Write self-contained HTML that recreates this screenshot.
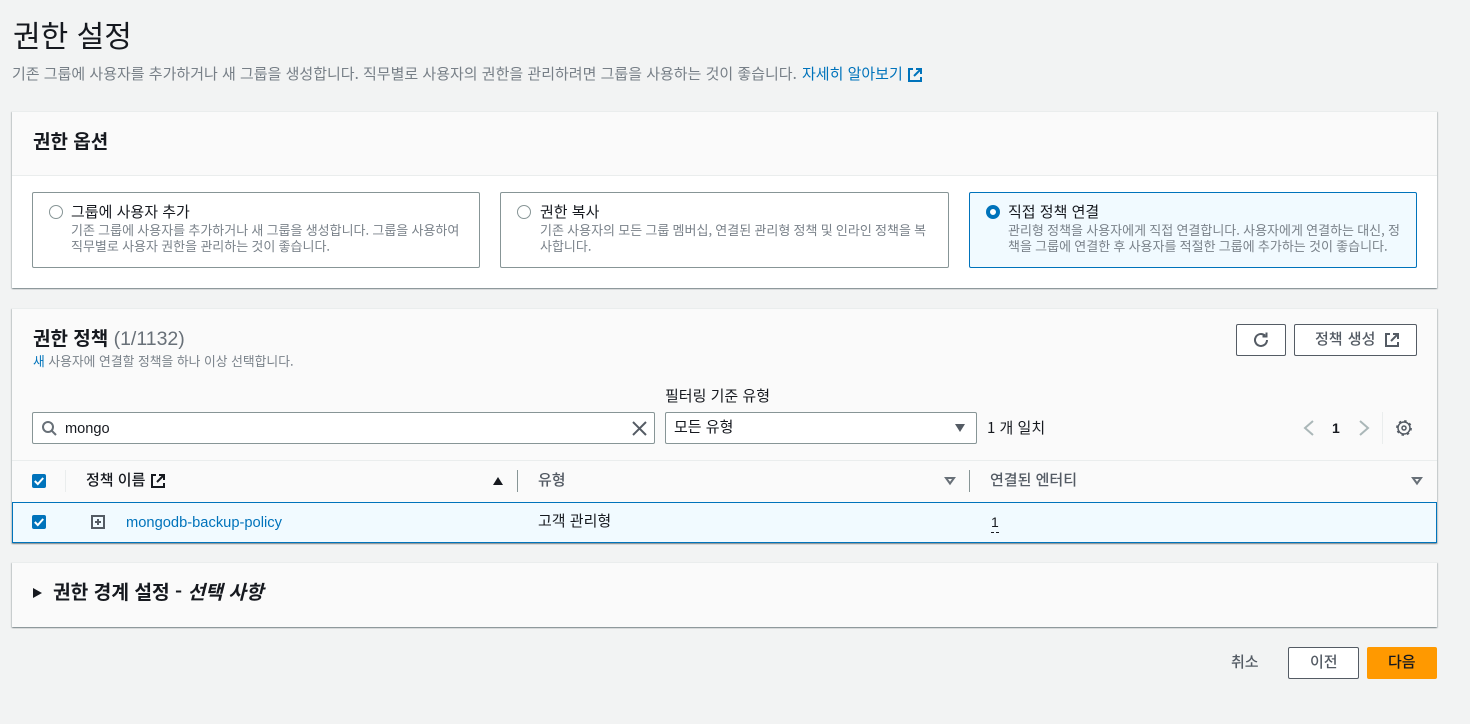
<!DOCTYPE html>
<html lang="ko"><head><meta charset="utf-8"><title>권한 설정</title>
<style>
*{box-sizing:border-box}
html,body{margin:0;padding:0}
body{width:1470px;height:724px;background:#f2f3f3;position:relative;overflow:hidden;font-family:"Liberation Sans","Noto Sans CJK KR",sans-serif;color:#16191f;font-size:14px}
.t{position:absolute;white-space:nowrap;line-height:20px}
.k{font-family:"Noto Sans CJK KR",sans-serif}
.card{position:absolute;left:12px;width:1425px;background:#fafafa;box-shadow:0 1px 1px 0 rgba(0,28,36,.3),1px 1px 1px 0 rgba(0,28,36,.15),-1px 1px 1px 0 rgba(0,28,36,.15);border-top:1px solid #eaeded}
.tile{position:absolute;top:192px;height:76px;border:1px solid #879596;border-radius:2px;background:#fff}
.tile.on{border-color:#0073bb;background:#f1faff}
.radio{position:absolute;top:205px;width:14px;height:14px;border-radius:50%;border:1.5px solid #879596;background:#fff}
.radio.on{border:4px solid #0073bb}
.d{font-size:13px;line-height:16px;color:#7a828a;word-spacing:-.4px}
.h{font-size:15px;font-weight:400}
.btn{position:absolute;border:1px solid #545b64;border-radius:2px;background:#fff}
.cb{position:absolute;left:32px;width:14px;height:14px;background:#0073bb;border-radius:2px}
.sep{position:absolute;width:1px;background:#879596}
svg{position:absolute;overflow:visible}
</style></head><body>

<div class="t k" style="left:13px;top:14px;font-size:30px;line-height:40px;color:#16191f">권한 설정</div>
<div class="t k" style="left:12px;top:64px;font-size:15px;color:#777f87">기존 그룹에 사용자를 추가하거나 새 그룹을 생성합니다. 직무별로 사용자의 권한을 관리하려면 그룹을 사용하는 것이 좋습니다. <span style="color:#0073bb;margin-left:1px">자세히 알아보기</span></div>
<svg style="left:908px;top:68px" width="14" height="14" viewBox="0 0 14 14" fill="none" stroke="#0073bb" stroke-width="2"><path d="M5 1H1v12h12V9M8 1h5v5M13 1L6 8"/></svg>

<!-- Card 1 -->
<div class="card" style="top:111px;height:177px;background:#fff">
  <div style="height:64px;background:#fafafa;border-bottom:1px solid #eaeded"></div>
</div>
<div class="t k" style="left:33px;top:130px;font-size:19px;font-weight:700;line-height:22px">권한 옵션</div>

<div class="tile" style="left:32px;width:448px"></div>
<div class="radio" style="left:49px"></div>
<div class="t k h" style="left:71px;top:202px">그룹에 사용자 추가</div>
<div class="t k d" style="left:71px;top:222px">기존 그룹에 사용자를 추가하거나 새 그룹을 생성합니다. 그룹을 사용하여<br>직무별로 사용자 권한을 관리하는 것이 좋습니다.</div>

<div class="tile" style="left:500px;width:449px"></div>
<div class="radio" style="left:517px"></div>
<div class="t k h" style="left:540px;top:202px">권한 복사</div>
<div class="t k d" style="left:540px;top:222px">기존 사용자의 모든 그룹 멤버십, 연결된 관리형 정책 및 인라인 정책을 복<br>사합니다.</div>

<div class="tile on" style="left:969px;width:448px"></div>
<div class="radio on" style="left:986px"></div>
<div class="t k h" style="left:1008px;top:202px">직접 정책 연결</div>
<div class="t k d" style="left:1008px;top:222px">관리형 정책을 사용자에게 직접 연결합니다. 사용자에게 연결하는 대신, 정<br>책을 그룹에 연결한 후 사용자를 적절한 그룹에 추가하는 것이 좋습니다.</div>

<!-- Card 2 -->
<div class="card" style="top:308px;height:235px"></div>
<div class="t k" style="left:33px;top:327px;font-size:19px;line-height:22px"><b>권한 정책</b> <span style="color:#687078;font-family:'Liberation Sans';font-size:19.500px">(1/1132)</span></div>
<div class="t k" style="left:33px;top:352px;font-size:12.800px;line-height:18px;color:#7a828a"><span style="color:#0073bb">새</span> 사용자에 연결할 정책을 하나 이상 선택합니다.</div>

<div class="btn" style="left:1236px;top:324px;width:50px;height:32px"></div>
<svg style="left:1253px;top:332px" width="16" height="16" viewBox="0 0 16 16" fill="none" stroke="#545b64" stroke-width="2"><path d="M14 8a6 6 0 1 1-2-4.500"/><path d="M13.500 .5V4.500H9.500"/></svg>
<div class="btn" style="left:1294px;top:324px;width:123px;height:32px"></div>
<div class="t k" style="left:1315px;top:329px;font-size:15px;word-spacing:1px;color:#545b64;font-weight:500">정책 생성</div>
<svg style="left:1385px;top:333px" width="14" height="14" viewBox="0 0 14 14" fill="none" stroke="#545b64" stroke-width="2"><path d="M5 1H1v12h12V9M8 1h5v5M13 1L6 8"/></svg>

<div class="t k h" style="left:665px;top:386px">필터링 기준 유형</div>

<div style="position:absolute;left:32px;top:412px;width:623px;height:32px;background:#fff;border:1px solid #879596;border-radius:2px"></div>
<svg style="left:41px;top:420px" width="16" height="16" viewBox="0 0 16 16" fill="none" stroke="#687078" stroke-width="2"><circle cx="7" cy="7" r="5"/><path d="M10.500 10.500L15 15"/></svg>
<div class="t" style="left:65px;top:419px;font-size:14.600px">mongo</div>
<svg style="left:632px;top:421px" width="14" height="14" viewBox="0 0 14 14" fill="none" stroke="#545b64" stroke-width="2"><path d="M1 1l13 13M14 1L1 14"/></svg>

<div style="position:absolute;left:665px;top:412px;width:312px;height:32px;background:#fff;border:1px solid #879596;border-radius:2px"></div>
<div class="t k h" style="left:674px;top:417px">모든 유형</div>
<svg style="left:955px;top:424px" width="10" height="8" viewBox="0 0 10 8"><path d="M0 0h10L5 8z" fill="#545b64"/></svg>

<div class="t k h" style="left:987px;top:418px">1 개 일치</div>

<svg style="left:1303px;top:420px" width="12" height="16" viewBox="0 0 12 16" fill="none" stroke="#aab7b8" stroke-width="2"><path d="M10 1L2 8l8 7"/></svg>
<div class="t" style="left:1332px;top:418px;font-size:14px;font-weight:700">1</div>
<svg style="left:1358px;top:420px" width="12" height="16" viewBox="0 0 12 16" fill="none" stroke="#aab7b8" stroke-width="2"><path d="M2 1l8 7-8 7"/></svg>
<div style="position:absolute;left:1382px;top:412px;width:1px;height:32px;background:#eaeded"></div>
<svg style="left:1396px;top:420px" width="16" height="16" viewBox="0 0 16 16" fill="none" stroke="#545b64"><circle cx="8" cy="8" r="6" stroke-width="1.500"/><circle cx="8" cy="8" r="7.200" stroke-width="1.400" stroke-dasharray="2.500 3.150"/><circle cx="8" cy="8" r="2" stroke-width="1.500"/></svg>

<div style="position:absolute;left:12px;top:460px;width:1425px;height:1px;background:#eaeded"></div>
<div class="cb" style="top:474px"></div>
<svg style="left:34px;top:477px" width="10" height="8" viewBox="0 0 10 8" fill="none" stroke="#fff" stroke-width="2"><path d="M.8 4l3 3L9.200 1"/></svg>
<div style="position:absolute;left:65px;top:470px;width:1px;height:22px;background:#eaeded"></div>
<div class="t k" style="left:86px;top:470px;font-size:15px;font-weight:500">정책 이름</div>
<svg style="left:151px;top:474px" width="14" height="14" viewBox="0 0 14 14" fill="none" stroke="#16191f" stroke-width="2"><path d="M5 1H1v12h12V9M8 1h5v5M13 1L6 8"/></svg>
<svg style="left:493px;top:477px" width="10" height="8" viewBox="0 0 10 8"><path d="M5 0l5 8H0z" fill="#16191f"/></svg>
<div class="sep" style="left:517px;top:470px;height:22px"></div>
<div class="t k" style="left:538px;top:470px;font-size:15px;color:#545b64;font-weight:500">유형</div>
<svg style="left:945px;top:477px" width="10" height="8" viewBox="0 0 10 8" fill="none" stroke="#687078" stroke-width="2"><path d="M1 1h8L5 6.500z"/></svg>
<div class="sep" style="left:969px;top:470px;height:22px"></div>
<div class="t k" style="left:990px;top:470px;font-size:15px;color:#545b64;font-weight:500">연결된 엔터티</div>
<svg style="left:1412px;top:477px" width="10" height="8" viewBox="0 0 10 8" fill="none" stroke="#687078" stroke-width="2"><path d="M1 1h8L5 6.500z"/></svg>

<div style="position:absolute;left:12px;top:502px;width:1425px;height:41px;background:#f1faff;border:1px solid #0073bb"></div>
<div class="cb" style="top:515px"></div>
<svg style="left:34px;top:518px" width="10" height="8" viewBox="0 0 10 8" fill="none" stroke="#fff" stroke-width="2"><path d="M.8 4l3 3L9.200 1"/></svg>
<svg style="left:91px;top:515px" width="14" height="14" viewBox="0 0 14 14" fill="none" stroke="#545b64" stroke-width="2"><rect x="1" y="1" width="12" height="12"/><path d="M7 4v6M4 7h6"/></svg>
<div class="t" style="left:126px;top:513px;font-size:14.700px;color:#0073bb">mongodb-backup-policy</div>
<div class="t k h" style="left:538px;top:511px">고객 관리형</div>
<div class="t" style="left:991px;top:513px;font-size:14px;border-bottom:1px dashed #16191f;line-height:19px">1</div>

<!-- Card 3 -->
<div class="card" style="top:562px;height:65px"></div>
<svg style="left:33px;top:588px" width="9" height="10" viewBox="0 0 9 10"><path d="M0 0l9 5-9 5z" fill="#16191f"/></svg>
<div class="t k" style="left:53px;top:580px;font-size:19.200px;line-height:22px;font-weight:700">권한 경계 설정 - <i>선택 사항</i></div>

<!-- Footer -->
<div class="t k" style="left:1231px;top:652px;font-size:15px;color:#545b64;font-weight:500">취소</div>
<div class="btn" style="left:1288px;top:647px;width:71px;height:32px"></div>
<div class="t k" style="left:1310px;top:652px;font-size:15px;color:#545b64;font-weight:500">이전</div>
<div style="position:absolute;left:1367px;top:647px;width:70px;height:32px;background:#ff9900;border-radius:2px"></div>
<div class="t k" style="left:1388px;top:652px;font-size:15px;color:#16191f;font-weight:500">다음</div>

</body></html>
